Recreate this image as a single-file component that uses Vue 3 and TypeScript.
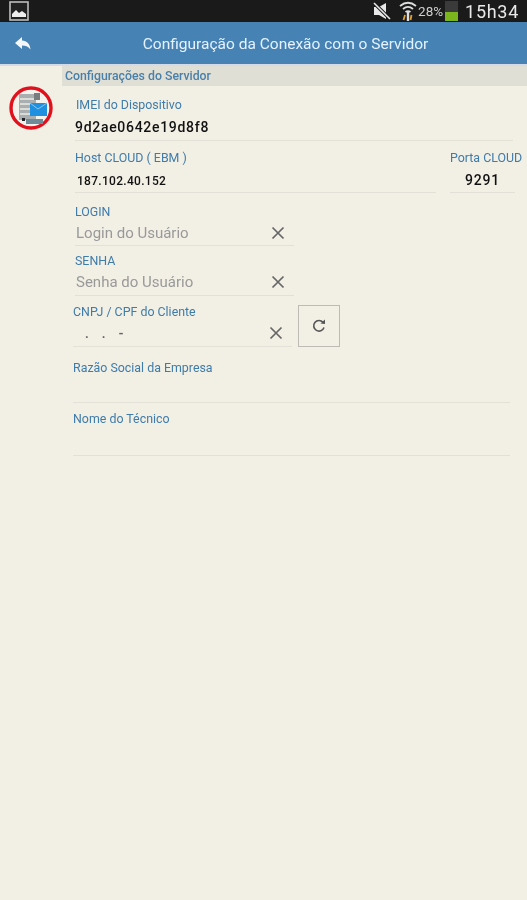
<script setup lang="ts">
const title = 'Configuração da Conexão com o Servidor'
</script>

<template>
  <div class="screen">
    <div class="status">
      <svg class="pic" width="20" height="20" viewBox="0 0 20 20">
        <rect x="1" y="1" width="18" height="18" fill="#222" stroke="#bdbdbd" stroke-width="1.6" />
        <path d="M3 16v-3l4-4 3 3 3-2 4 3v3z" fill="#eee" />
      </svg>
      <div class="status-right">
        <svg width="20" height="20" viewBox="0 0 20 20">
          <path d="M2 6h5l7-4v16l-7-4H2z" fill="#e8e8e8" />
          <path d="M2 2l16 16" stroke="#1a1a1a" stroke-width="3.4" />
          <path d="M2 2l16 16" stroke="#e8e8e8" stroke-width="1.6" />
        </svg>
        <svg class="wifi" width="20" height="20" viewBox="0 0 20 20">
          <path d="M2 5c5-4 11-4 16 0M5 8c3-2.500 7-2.500 10 0M7.500 11c1.500-1 3.500-1 5 0" fill="none" stroke="#ddd" stroke-width="1.8" />
          <path d="M10 11v9" stroke="#ddd" stroke-width="2.4" />
          <path d="M7 14l-1.500 5M13.500 14l-1 5" stroke="#e0a030" stroke-width="1.8" />
        </svg>
        <span class="pct">28%</span>
        <div class="battery"><div class="battery-level"></div></div>
        <span class="clock">15h34</span>
      </div>
    </div>

    <header class="bar">
      <svg class="back" width="18" height="16" viewBox="0 0 18 16">
        <path d="M8 1 1 7l7 6V9.500c3.500 0 6 .8 8.500 4C16 8 13 4.800 8 4.500z" fill="#f4f6f8" />
      </svg>
      <h1 class="title">{{ title }}</h1>
    </header>

    <div class="content">
      <aside class="side">
        <div class="badge">
          <svg width="44" height="44" viewBox="0 0 44 44">
            <circle cx="22" cy="22" r="20" fill="#f4f2ec" stroke="#e0101c" stroke-width="3.4" />
            <path d="M10 8h17v26H10z" fill="#a9aeb0" />
            <path d="M11 13h14M11 18h14M11 23h14M11 28h14" stroke="#eceae4" stroke-width="1.5" />
            <rect x="25" y="7" width="6" height="7" fill="#787c7e" />
            <rect x="21" y="17" width="17" height="13" fill="#1f8fe0" />
            <path d="M21 17l8 6 9-6" fill="none" stroke="#8cc8f0" stroke-width="1" />
            <rect x="17" y="33" width="17" height="5" fill="#6f8a98" />
            <rect x="13" y="32" width="3" height="3" fill="#222" />
          </svg>
        </div>
      </aside>

      <main class="main">
        <div class="section">Configurações do Servidor</div>

        <div class="field imei">
          <label class="label">IMEI do Dispositivo</label>
          <div class="value mono">9d2ae0642e19d8f8</div>
        </div>

        <div class="host-row">
          <div class="field host">
            <label class="label">Host CLOUD ( EBM )</label>
            <div class="value small">187.102.40.152</div>
          </div>
          <div class="field port">
            <label class="label">Porta CLOUD</label>
            <div class="value port-value">9291</div>
          </div>
        </div>

        <div class="field short login">
          <label class="label">LOGIN</label>
          <div class="value placeholder">
            <span>Login do Usuário</span>
            <svg class="clear" width="14" height="14" viewBox="0 0 14 14"><path d="M1.500 1.500l11 11M12.500 1.500l-11 11" /></svg>
          </div>
        </div>

        <div class="field short senha">
          <label class="label">SENHA</label>
          <div class="value placeholder">
            <span>Senha do Usuário</span>
            <svg class="clear" width="14" height="14" viewBox="0 0 14 14"><path d="M1.500 1.500l11 11M12.500 1.500l-11 11" /></svg>
          </div>
        </div>

        <div class="cnpj-row">
          <div class="field cnpj">
            <label class="label">CNPJ / CPF do Cliente</label>
            <div class="value placeholder">
              <span class="mask">.&nbsp;&nbsp;&nbsp;&nbsp;.&nbsp;&nbsp;&nbsp;&nbsp;-</span>
              <svg class="clear" width="14" height="14" viewBox="0 0 14 14"><path d="M1.500 1.500l11 11M12.500 1.500l-11 11" /></svg>
            </div>
          </div>
          <button class="refresh" type="button" aria-label="Atualizar">
            <svg width="16" height="16" viewBox="0 0 16 16">
              <path d="M13 9.500A5.300 5.300 0 1 1 12 4.300" fill="none" stroke="#555" stroke-width="1.6" />
              <path d="M9.500 5.500 14 6V1.500z" fill="#555" />
            </svg>
          </button>
        </div>

        <div class="field wide razao">
          <label class="label">Razão Social da Empresa</label>
        </div>
        <div class="field wide nome">
          <label class="label">Nome do Técnico</label>
        </div>
      </main>
    </div>
  </div>
</template>

<style scoped>
.screen {
  width: 527px;
  height: 900px;
  display: flex;
  flex-direction: column;
  overflow: hidden;
  background: #f2efe5;
  font-family: Roboto, "Liberation Sans", sans-serif;
  filter: blur(0.5px);
}
.status {
  height: 22px;
  flex: none;
  display: flex;
  align-items: center;
  justify-content: space-between;
  padding: 0 8px 0 9px;
  background: #1a1a1a;
}
.pic { display: block; }
.status-right { display: flex; align-items: center; }
.wifi { margin-left: 6px; }
.pct { font-size: 13.500px; color: #cfcfcf; letter-spacing: 0; }
.battery {
  width: 13px;
  height: 20px;
  margin-left: 2px;
  background: #3a3a3a;
  display: flex;
  align-items: flex-end;
}
.battery-level { width: 100%; height: 9px; background: #7ab51d; }
.clock { margin-left: 7px; font-size: 18px; color: #e8e8e8; letter-spacing: 0.7px; }

.bar {
  height: 42px;
  flex: none;
  position: relative;
  display: flex;
  align-items: center;
  justify-content: center;
  background: #4682b4;
  border-bottom: 2px solid #d5dbe6;
  box-sizing: content-box;
}
.back { position: absolute; left: 14px; top: 14px; }
.title {
  margin: 1px 0 0 44px;
  font-size: 15.500px;
  font-weight: 400;
  color: #e4f3ff;
}

.content { flex: 1; display: flex; }
.side { width: 62px; flex: none; }
.badge { margin: 20px 0 0 9px; }
.badge svg { display: block; }
.main { flex: 1; min-width: 0; }
.section {
  height: 20px;
  line-height: 20px;
  padding-left: 3px;
  background: #e0dfd6;
  color: #4a7fa8;
  font-size: 12.300px;
  font-weight: 500;
}
.field { box-sizing: border-box; border-bottom: 1px solid #e3e1d7; }
.label {
  display: block;
  height: 14px;
  line-height: 14px;
  font-size: 12.400px;
  color: #3f7cab;
}
.value { display: flex; align-items: center; justify-content: space-between; color: #111; }
.imei { margin: 12px 14px 0 13px; height: 43px; padding-top: 0; }
.imei .label { margin-left: 1px; }
.imei .value { height: 29px; padding-bottom: 1px; }
.mono { font-size: 14px; font-weight: 500; letter-spacing: 0.7px; }
.host-row { display: flex; justify-content: space-between; margin: 10px 5px 0 13px; }
.host { width: 361px; height: 42px; }
.small { height: 27px; padding: 2px 0 0 2px; font-size: 12px; font-weight: 500; letter-spacing: 0.3px; }
.port { width: 72px; height: 42px; border-bottom: none; }
.port .label { white-space: nowrap; }
.port-value {
  width: 65px;
  height: 28px;
  box-sizing: border-box;
  border-bottom: 1px solid #e3e1d7;
  padding-top: 2px;
  justify-content: center;
  font-size: 14px;
  font-weight: 500;
  letter-spacing: 0.8px;
}
.short { margin-left: 13px; width: 219px; }
.login { margin-top: 12px; height: 41px; }
.senha { margin-top: 8px; height: 42px; }
.placeholder { height: 27px; padding: 0 9px 0 1px; color: #999; font-size: 15px; }
.clear { display: block; flex: none; }
.clear path { fill: none; stroke: #666; stroke-width: 1.7; }
.cnpj-row { display: flex; align-items: flex-end; margin: 9px 0 0 11px; }
.cnpj { width: 219px; height: 42px; }
.cnpj .placeholder { height: 27px; padding-left: 1px; }
.mask { padding: 1px 0 0 11px; color: #666; font-size: 13px; font-weight: 700; }
.refresh {
  width: 42px;
  height: 42px;
  margin-left: 6px;
  padding: 0 1px 0 0;
  display: flex;
  align-items: center;
  justify-content: center;
  box-sizing: border-box;
  background: transparent;
  border: 1px solid #bdbcb4;
  border-radius: 0;
}
.wide { margin-left: 11px; width: 437px; }
.razao { margin-top: 14px; height: 42px; }
.nome { margin-top: 9px; height: 44px; }
</style>
